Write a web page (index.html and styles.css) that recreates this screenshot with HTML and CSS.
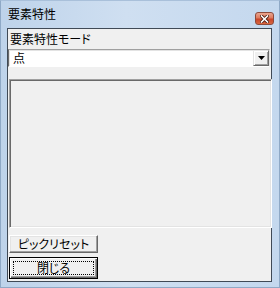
FILE: index.html
```html
<!DOCTYPE html>
<html lang="ja">
<head>
  <meta charset="UTF-8" />
  <title>要素特性</title>
  <link rel="stylesheet" href="styles.css">
</head>
<body>
  <div class="window">
    <div class="titlebar">
      <span class="title">要素特性</span>
      <button class="close" type="button" aria-label="閉じる">
        <svg width="9" height="8" viewBox="0 0 9 8">
          <path d="M1.5 1 L7.5 7 M7.5 1 L1.5 7" stroke="#4a1a10" stroke-width="3.2" stroke-linecap="square" />
          <path d="M1.5 1 L7.5 7 M7.5 1 L1.5 7" stroke="#ffffff" stroke-width="1.6" stroke-linecap="square" />
        </svg>
      </button>
    </div>

    <div class="client">
      <label class="label" for="modo">要素特性モード</label>
      <div class="combo" id="modo">
        <span class="combo-text">点</span>
        <span class="combo-btn">
          <svg width="7" height="4" viewBox="0 0 7 4"><path d="M0 0 H7 L3.5 4 Z" fill="#000" /></svg>
        </span>
      </div>

      <div class="lista"></div>

      <div class="botoes">
        <button class="btn" type="button">ピックリセット</button>
        <button class="btn default" type="button"><span class="focus">閉じる</span></button>
      </div>
    </div>
  </div>
</body>
</html>
```

FILE: styles.css
```css
html, body {
  margin: 0;
  padding: 0;
}
body {
  width: 280px;
  height: 288px;
  overflow: hidden;
  font-family: "Noto Sans CJK JP", "Noto Sans", sans-serif;
  font-size: 12px;
  font-feature-settings: "palt";
}
.window {
  box-sizing: border-box;
  width: 280px;
  height: 288px;
  display: flex;
  flex-direction: column;
  padding: 0 7px 5px 6px;
  background: linear-gradient(to right, #bed3ea 0%, #cfdff1 45%, #c4d8ee 100%);
  border: 1px solid #8fa9c6;
  border-top-color: #a9c0da;
}
.titlebar {
  height: 28px;
  display: flex;
  align-items: center;
  padding-left: 1px;
}
.title {
  color: #000;
  font-size: 12px;
  line-height: 14px;
  margin-top: -2px;
}
.close {
  margin-left: auto;
  margin-right: -2px;
  margin-top: 8px;
  width: 19px;
  height: 13px;
  padding: 0;
  display: flex;
  align-items: center;
  justify-content: center;
  border: 1px solid #8d4a3c;
  border-radius: 3px;
  background: linear-gradient(to bottom, #eaa58f 0%, #de7a5e 45%, #c8452a 55%, #d9663e 100%);
}
.client {
  flex: 1;
  display: flex;
  flex-direction: column;
  background: #f0f0f0;
  border: 1px solid #404a56;
  padding: 2px 1px 2px 0;
}
.label {
  padding-left: 2px;
  line-height: 16px;
  color: #000;
}
.combo {
  box-sizing: border-box;
  margin-top: 2px;
  width: 262px;
  height: 18px;
  display: flex;
  align-items: center;
  background: #fff;
  border-top: 1px solid #a0a0a0;
  border-left: 1px solid #696969;
  border-right: 1px solid #e3e3e3;
  border-bottom: 1px solid #ffffff;
  box-shadow: inset 1px 1px 0 #e3e3e3;
}
.combo-text {
  padding-left: 4px;
  line-height: 14px;
  color: #000;
}
.combo-btn {
  box-sizing: border-box;
  margin-left: auto;
  width: 16px;
  height: 16px;
  display: flex;
  align-items: center;
  justify-content: center;
  background: #f0f0f0;
  border-top: 1px solid #e3e3e3;
  border-left: 1px solid #e3e3e3;
  border-right: 1px solid #696969;
  border-bottom: 1px solid #696969;
  box-shadow: inset 1px 1px 0 #fff, inset -1px -1px 0 #a0a0a0;
}
.lista {
  box-sizing: border-box;
  margin: 12px 0 0 1px;
  width: 263px;
  height: 149px;
  background: #f0f0f0;
  border-top: 1px solid #a0a0a0;
  border-left: 1px solid #a0a0a0;
  border-right: 1px solid #ffffff;
  border-bottom: 1px solid #ffffff;
  box-shadow: inset 1px 1px 0 #696969, inset -1px -1px 0 #e3e3e3;
}
.botoes {
  display: flex;
  flex-direction: column;
  gap: 4px;
  margin: 7px 0 0 1px;
}
.btn {
  box-sizing: border-box;
  width: 89px;
  height: 18px;
  padding: 0;
  font-family: inherit;
  font-size: 12px;
  font-feature-settings: "palt";
  line-height: 14px;
  color: #000;
  background: #f0f0f0;
  border-top: 1px solid #ffffff;
  border-left: 1px solid #ffffff;
  border-right: 1px solid #696969;
  border-bottom: 1px solid #696969;
  box-shadow: inset -1px -1px 0 #a0a0a0, inset 1px 1px 0 #e3e3e3;
}
.btn.default {
  height: 22px;
  border: 1px solid #000;
  box-shadow: inset 1px 1px 0 #fff, inset -1px -1px 0 #696969, inset -2px -2px 0 #a0a0a0;
  display: flex;
  padding: 3px;
}
.focus {
  flex: 1;
  display: flex;
  align-items: center;
  justify-content: center;
  border: 1px dotted #000;
}
```
